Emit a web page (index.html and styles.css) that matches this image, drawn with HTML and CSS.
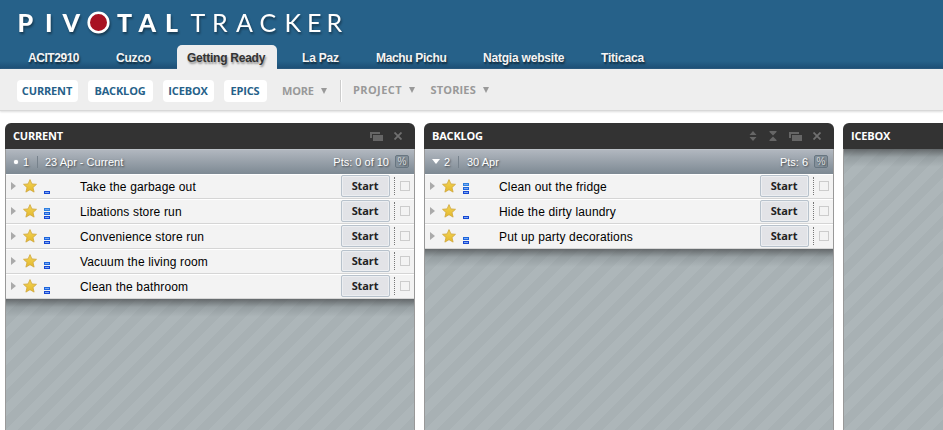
FILE: index.html
```html
<!DOCTYPE html>
<html lang="en">
<head>
<meta charset="utf-8">
<title>Pivotal Tracker</title>
<link rel="stylesheet" href="styles.css">
</head>
<body>
<svg class="defs" width="0" height="0" aria-hidden="true">
  <defs>
    <linearGradient id="gold" x1="0" y1="0" x2="0" y2="1"><stop offset="0" stop-color="#f4d556"/><stop offset="1" stop-color="#e3b82c"/></linearGradient>
    <symbol id="star" viewBox="0 0 14 14"><path d="M7 .6 8.900 4.900 13.500 5.300 10 8.500 11.100 13.100 7 10.700 2.900 13.100 4 8.500.5 5.300 5.100 4.900Z" fill="url(#gold)" stroke="#cfa63a" stroke-width=".8"/></symbol>
    <symbol id="clone" viewBox="0 0 13 9"><path d="M0 0H10V2H2V6H0Z M3 3H13V9H3Z"/></symbol>
    <symbol id="close" viewBox="0 0 8 8"><path d="M.5.5 7.500 7.500M7.500.5.5 7.500" stroke="#707070" stroke-width="1.800"/></symbol>
    <symbol id="expand" viewBox="0 0 8 10"><path d="M4 0 7.500 4H.5Z M.5 6H7.500L4 10Z"/></symbol>
    <symbol id="collapse" viewBox="0 0 8 10"><path d="M.5 0H7.500V1L4 4.500.5 1Z M4 5.500 7.500 9V10H.5V9Z"/></symbol>
  </defs>
</svg>
<header class="top">
  <svg class="logo" width="360" height="36" viewBox="0 0 360 36">
    <g class="logo-bold">
      <text x="17.500" y="26.500">P</text><text x="45" y="26.500">I</text><text x="62.500" y="26.500">V</text>
      <text x="117" y="26.500">T</text><text x="138.500" y="26.500">A</text><text x="165" y="26.500">L</text>
    </g>
    <circle cx="98.500" cy="17.500" r="9.800" fill="#a81222" stroke="#fff" stroke-width="2.600"/>
    <g class="logo-light">
      <text x="190.500" y="26.500">T</text><text x="212" y="26.500">R</text><text x="236" y="26.500">A</text><text x="259.500" y="26.500">C</text><text x="284.500" y="26.500">K</text><text x="307" y="26.500">E</text><text x="326.500" y="26.500">R</text>
    </g>
  </svg>
  <nav class="tabs">
    <a class="t1">ACIT2910</a><a class="t2">Cuzco</a><a class="t3 active">Getting Ready</a><a class="t4">La Paz</a><a class="t5">Machu Pichu</a><a class="t6">Natgia website</a><a class="t7">Titicaca</a>
  </nav>
</header>
<div class="toolbar">
  <button class="b1">CURRENT</button><button class="b2">BACKLOG</button><button class="b3">ICEBOX</button><button class="b4">EPICS</button>
  <span class="menu more">MORE<i></i></span>
  <span class="rule"></span>
  <span class="menu project">PROJECT<i></i></span>
  <span class="menu stories">STORIES<i></i></span>
</div>
<main class="panels" id="panels"></main>
<script src="app.js"></script>
</body>
</html>
```
FILE: styles.css
```css
* { box-sizing: border-box; }
body { margin: 0; width: 943px; height: 430px; overflow: hidden; background: #fff; font-family: "Liberation Sans", Arial, sans-serif; }
.defs { position: absolute; }
.top { height: 69px; background: linear-gradient(#266189 0, #266189 61px, #1c4d74 69px); display: flex; flex-direction: column; justify-content: space-between; }
.logo { display: block; margin-top: 5px; width: 360px; height: 36px; overflow: visible; filter: drop-shadow(1px 2px 1px rgba(0,0,0,.4)); }
.logo text { fill: #fff; font-family: Lato, sans-serif; font-size: 25px; }
.logo-bold text { font-weight: 900; }
.logo-light text { font-weight: 400; }
.tabs { display: flex; height: 24px; }
.tabs a { height: 24px; line-height: 26px; color: #f4f4f4; font-size: 12px; font-weight: bold; white-space: nowrap; text-shadow: 1px 2px 2px rgba(0,0,0,.6); letter-spacing: -.2px; }
.tabs .t1 { margin-left: 28px; width: 88px; letter-spacing: -.45px; }
.tabs .t2 { width: 61px; }
.tabs .t3 { width: 100px; padding-left: 10px; letter-spacing: -.25px; }
.tabs .t4 { margin-left: 25px; width: 74px; }
.tabs .t5 { width: 107px; letter-spacing: -.33px; }
.tabs .t6 { width: 118px; }
.tabs .active { color: #333; background: #eee; border-radius: 5px 5px 0 0; text-shadow: 1px 2px 2px rgba(0,0,0,.4); }
.toolbar { height: 42px; background: #eee; border-bottom: 1px solid #d8d8d8; box-shadow: 0 1px 2px #ddd; display: flex; align-items: flex-start; padding: 11px 0 0 17px; font: bold 11px "Open Sans", sans-serif; }
.toolbar button { height: 22px; padding: 0 1px 2px 0; border: 0; border-radius: 4px; background: #fff; color: #266189; font: inherit; letter-spacing: -.15px; }
.b1 { width: 61px; margin-right: 10px; } .b2 { width: 65px; margin-right: 10px; } .b3 { width: 51px; margin-right: 10px; } .b4 { width: 43px; margin-right: 15px; }
.menu { color: #999; line-height: 22px; display: flex; }
.menu i { margin: 8px 0 0 7px; width: 0; height: 0; border: 3.500px solid transparent; border-top: 6px solid #999; border-bottom: 0; }
.more { width: 58px; letter-spacing: -.2px; }
.rule { width: 2px; height: 22px; background: #ccc; border-right: 1px solid #fff; margin-right: 11px; }
.project, .stories { line-height: 20px; }
.project { width: 77.500px; letter-spacing: .4px; }
.stories { letter-spacing: .15px; }
.project i, .stories i { margin-top: 7px; }
.panels { display: flex; gap: 9px; width: 943px; overflow: hidden; padding: 12px 0 0 5px; }
.panel { flex: none; width: 410px; height: 307px; display: flex; flex-direction: column; }
.panel:last-child { width: 100px; }
.panel:last-child .body { border-right: 0; }
.panel:last-child .head { border-radius: 6px 0 0 0; }
.head { height: 26px; border-radius: 6px 6px 0 0; background: #333; color: #fff; display: flex; align-items: center; padding: 0 13px 0 8px; font: bold 11px "Open Sans", sans-serif; letter-spacing: -.2px; }
.head .title { flex: 1; padding-bottom: 2px; }
.head svg { fill: #666; }
.ic-expand, .ic-collapse { width: 8px; height: 10px; margin-right: 12px; }
.ic-clone { width: 13px; height: 9px; margin-right: 11px; }
.ic-close { width: 8px; height: 8px; }
.body { flex: 1; border: 1px solid #999; border-width: 0 1px; background: repeating-linear-gradient(135deg, #adb6b9 0 9px, #a8b1b4 9px 18px); }
.iter { height: 25px; background: linear-gradient(#b1b7bf, #7d8993); border-top: 1px solid #bcc2c8; color: #fff; font-size: 11px; display: flex; align-items: center; padding: 0 5px 1px 7px; text-shadow: 1px 1px 2px rgba(0,0,0,.6); }
.mark { flex: none; }
.mark i { display: block; }
.dot { width: 4px; height: 4px; border-radius: 50%; background: #fff; margin: 0 5px 0 1px; box-shadow: 0 0 1px #fff; }
.down { width: 8px; border: 4px solid transparent; border-top: 5px solid #fff; border-bottom: 0; margin-right: 4px; }
.num { width: 14px; }
.date { flex: 1; border-left: 1px solid #77828c; padding-left: 7px; }
.down-date { padding-left: 8px; }
.pct { width: 14px; height: 13px; margin-left: 6px; border: 1px solid #687681; border-radius: 2px; background: #84909a; color: #d8dcdf; font-size: 10px; line-height: 12px; text-align: center; }
.row { height: 25px; background: #f3f3f3; border-top: 1px solid #fff; border-bottom: 1px solid #d5d5d5; display: flex; align-items: center; padding: 0 0 1px 5px; }
.tri { width: 0; height: 0; border: 4.500px solid transparent; border-left: 5px solid #aaa; border-right: 0; margin-right: 7px; }
.star { width: 14px; height: 14px; margin: 0 7px 0 0; }
.est { width: 6px; height: 13px; display: flex; flex-direction: column; justify-content: flex-end; margin: 0 30px 0 0; padding-top: 0; transform: translateY(1px); }
.est i { height: 3px; margin-top: 1px; background: #79a8f2; border: 1px solid #1747d3; }
.est i:nth-last-child(2) { border-color: #1c65dd; }
.est i:nth-last-child(3) { border-color: #2c80df; }
.name { flex: 1; padding-top: 1px; color: #000; font-size: 12px; white-space: nowrap; letter-spacing: .16px; }
.start { width: 49px; height: 22px; padding: 0 1px 1px 0; border: 1px solid #b8c2cc; border-radius: 2px; background: #e2e3e7; box-shadow: inset 0 0 0 1px #eceef1; color: #222; font: bold 11px "Open Sans", sans-serif; letter-spacing: -.1px; }
.dots { height: 18px; margin-left: 4px; border-left: 1px dotted #777; }
.check { width: 10px; height: 10px; border: 1px solid #ccc; margin: 0 4px 0 5px; }
.shade { height: 18px; background: linear-gradient(rgba(70,73,75,.7), rgba(90,98,102,.25) 45%, transparent); }
```
FILE: app.js
```js
const panels = [
  { title: "CURRENT", icons: ["clone", "close"], mark: "dot", num: 1, date: "23 Apr - Current", pts: "Pts: 0 of 10",
    rows: [["Take the garbage out", 1], ["Libations store run", 3], ["Convenience store run", 2], ["Vacuum the living room", 2], ["Clean the bathroom", 2]] },
  { title: "BACKLOG", icons: ["expand", "collapse", "clone", "close"], mark: "down", num: 2, date: "30 Apr", pts: "Pts: 6",
    rows: [["Clean out the fridge", 3], ["Hide the dirty laundry", 1], ["Put up party decorations", 2]] },
  { title: "ICEBOX", icons: [], rows: [] }
];
const icon = n => `<svg class="ic-${n}"><use href="#${n}"/></svg>`;
document.getElementById("panels").innerHTML = panels.map(p => `
<section class="panel"><div class="head"><span class="title">${p.title}</span>${p.icons.map(icon).join("")}</div>
<div class="body">${p.num ? `<div class="iter"><span class="mark"><i class="${p.mark}"></i></span><span class="num">${p.num}</span><span class="date ${p.mark}-date">${p.date}</span><span>${p.pts}</span><span class="pct">%</span></div>` : ""}
${p.rows.map(([n, e]) => `<div class="row"><i class="tri"></i><svg class="star"><use href="#star"/></svg><span class="est">${"<i></i>".repeat(e)}</span><span class="name">${n}</span><button class="start">Start</button><i class="dots"></i><i class="check"></i></div>`).join("")}
<div class="shade"></div></div></section>`).join("");
```
